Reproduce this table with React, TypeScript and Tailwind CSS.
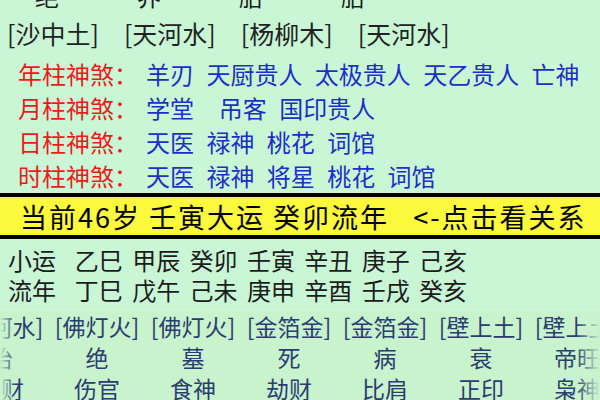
import React from "react";

const topChars = ["绝", "养", "胎", "胎"];
const nayin = ["[沙中土]", "[天河水]", "[杨柳木]", "[天河水]"];

const shensha = [
  { label: "年柱神煞：", items: "羊刃 天厨贵人 太极贵人 天乙贵人 亡神" },
  { label: "月柱神煞：", items: "学堂  吊客 国印贵人" },
  { label: "日柱神煞：", items: "天医 禄神 桃花 词馆" },
  { label: "时柱神煞：", items: "天医 禄神 将星 桃花 词馆" },
];

const cols = [
  { nayin: "[天河水]", state: "胎", god: "正财" },
  { nayin: "[佛灯火]", state: "绝", god: "伤官" },
  { nayin: "[佛灯火]", state: "墓", god: "食神" },
  { nayin: "[金箔金]", state: "死", god: "劫财" },
  { nayin: "[金箔金]", state: "病", god: "比肩" },
  { nayin: "[壁上土]", state: "衰", god: "正印" },
  { nayin: "[壁上土]", state: "帝旺", god: "枭神" },
];

export default function App() {
  return (
    <div className="w-[600px] h-[400px] overflow-hidden bg-[#c9f7d6] font-['Noto_Sans_CJK_SC','Noto_Sans',sans-serif] text-[24px] text-[#1c1c1c]">
      {/* 上方残留的十二长生 */}
      <div className="-mt-[16px] h-[24px] leading-[24px] flex pl-[35px] gap-[78px]">
        {topChars.map((c, i) => (
          <span key={i}>{c}</span>
        ))}
      </div>

      <div className="h-[49px] flex items-center pl-[7px] pt-[3px] gap-[25px] text-[25px] text-[#222]">
        {nayin.map((n, i) => (
          <span key={i}>{n}</span>
        ))}
      </div>

      {shensha.map((row) => (
        <div key={row.label} className="h-[34px] flex items-center pl-[18px] whitespace-pre">
          <span className="text-[#ec1b1b] w-[128px]">{row.label}</span>
          <span className="text-[#1d2fc6] [word-spacing:7px]">{row.items}</span>
        </div>
      ))}

      <div className="border-y-4 border-black bg-[#fdf93c] h-[46px] flex items-center pl-[20px] pt-[2px] whitespace-pre text-black text-[27px] tracking-[2px]">
        当前46岁 壬寅大运 癸卯流年   &lt;-点击看关系
      </div>

      <div className="pt-[6px] pl-[8px] whitespace-pre [word-spacing:4px]">
        <div className="h-[30px] flex items-center">小运  乙巳 甲辰 癸卯 壬寅 辛丑 庚子 己亥</div>
        <div className="h-[30px] flex items-center">流年  丁巳 戊午 己未 庚申 辛酉 壬戌 癸亥</div>
      </div>

      <div className="relative mt-[6px] overflow-hidden bg-[#c8f3cd] text-[23px] text-[#2b3d70]">
        <div className="flex -ml-[47px]">
          {cols.map((c, i) => (
            <div key={i} className="w-[96px] shrink-0 flex flex-col items-center">
              <div className="h-[31px] leading-[31px]">{c.nayin}</div>
              <div className="h-[31px] leading-[31px]">{c.state}</div>
              <div className="h-[31px] leading-[31px]">{c.god}</div>
            </div>
          ))}
        </div>
        <div className="absolute inset-y-0 left-0 w-[16px] bg-gradient-to-r from-[#c8f3cd] to-transparent" />
        <div className="absolute inset-y-0 right-0 w-[24px] bg-gradient-to-l from-[#c8f3cd] to-transparent" />
      </div>
    </div>
  );
}
